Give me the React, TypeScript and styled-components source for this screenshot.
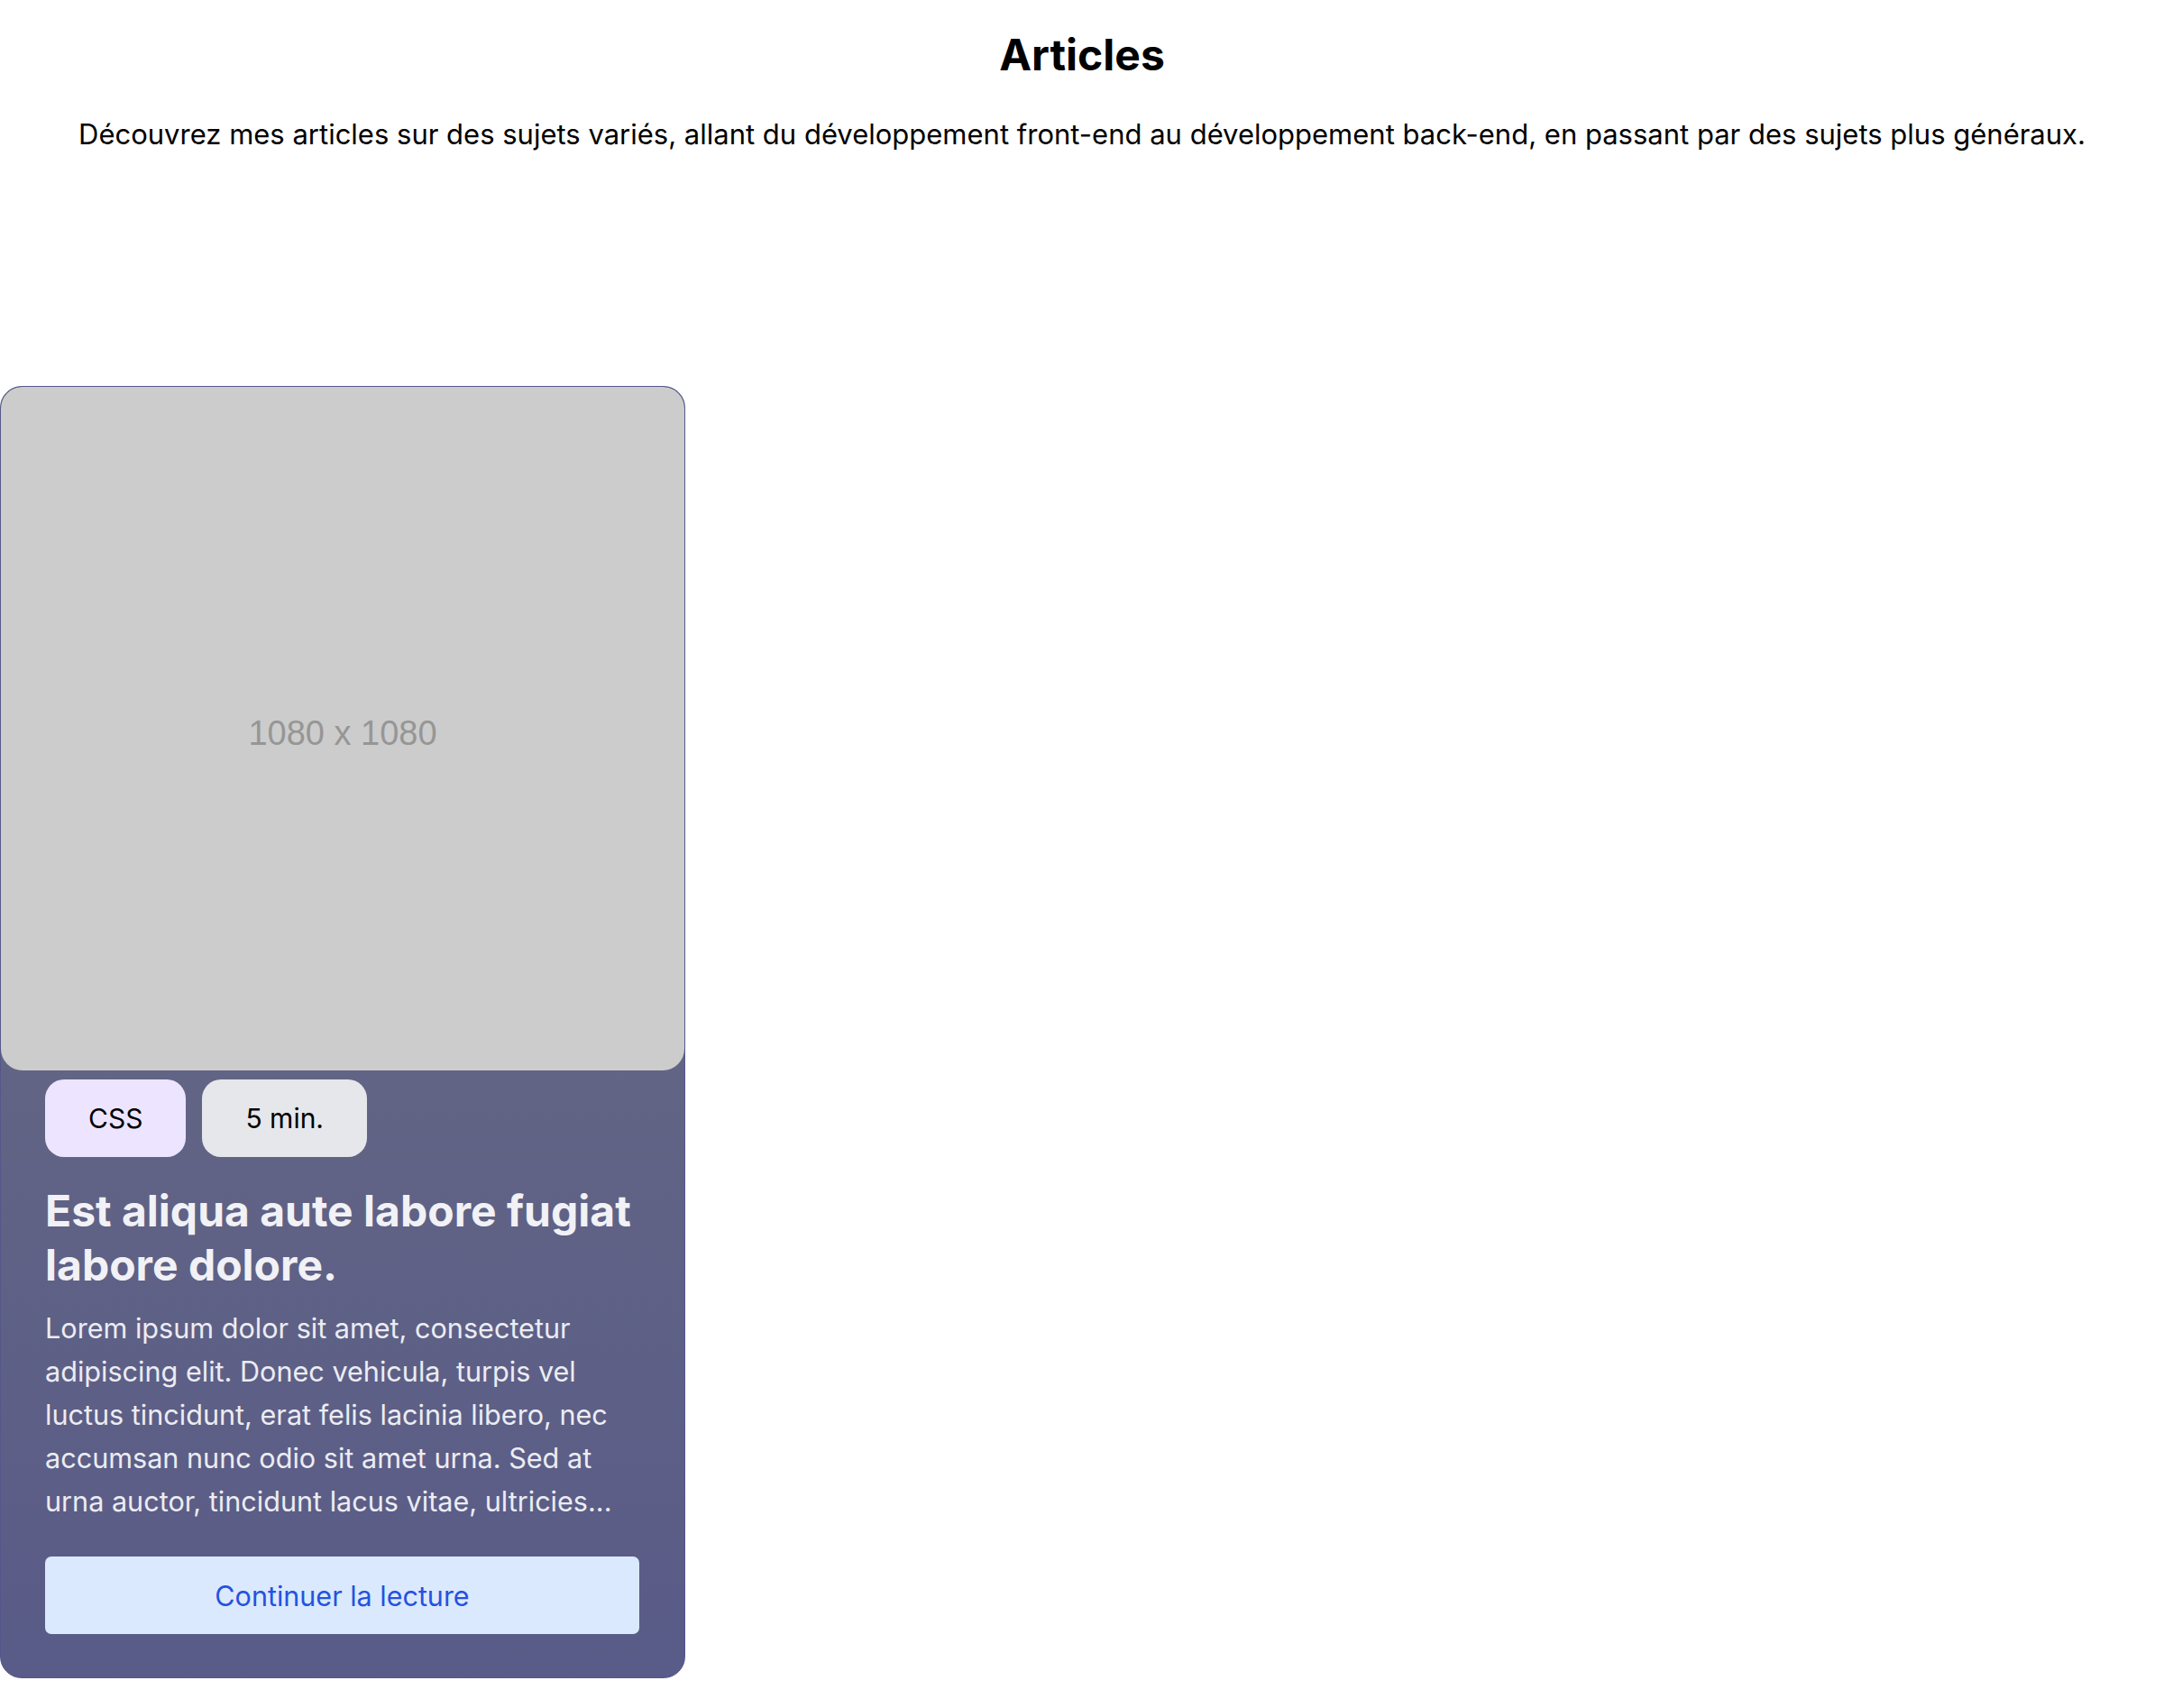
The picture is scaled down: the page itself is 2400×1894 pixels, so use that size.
import React from "react";
import styled, { createGlobalStyle } from "styled-components";

const GlobalStyle = createGlobalStyle`
  html, body { margin: 0; padding: 0; background: #ffffff; }
  body { font-family: Inter, "Noto Sans", sans-serif; color: #000; }
  * { box-sizing: border-box; }
`;

const Page = styled.main`
  display: flex;
  flex-direction: column;
  padding-top: 32px;
`;

const Header = styled.header`
  display: flex;
  flex-direction: column;
  align-items: center;
  gap: 39px;
`;

const Title = styled.h1`
  margin: 0;
  font-size: 48px;
  line-height: 58px;
  font-weight: 700;
  color: #000;
`;

const Lead = styled.p`
  margin: 0;
  font-size: 31px;
  line-height: 39px;
  font-weight: 400;
  color: #000;
  text-align: center;
`;

const Grid = styled.section`
  display: grid;
  grid-template-columns: repeat(3, 760px);
  margin-top: 260px;
`;

const Card = styled.article`
  display: flex;
  flex-direction: column;
  border: 1px solid #55578a;
  border-radius: 24px;
  background: linear-gradient(to bottom, #66698b 0%, #626584 50%, #595b88 100%);
  overflow: hidden;
`;

const Placeholder = styled.div`
  width: 100%;
  aspect-ratio: 1 / 1;
  background: #cccccc;
  border-radius: 24px;
  display: flex;
  align-items: center;
  justify-content: center;
  color: #969696;
  font-family: "Liberation Sans", Arial, sans-serif;
  font-size: 38px;
  padding-top: 11px;
`;

const Body = styled.div`
  display: flex;
  flex-direction: column;
  padding: 10px 50px 48px 49px;
`;

const Tags = styled.div`
  display: flex;
  gap: 18px;
`;

const Tag = styled.span<{ $tone: "violet" | "gray" }>`
  display: inline-flex;
  align-items: center;
  justify-content: center;
  height: 86px;
  padding: 0 48px;
  border-radius: 21px;
  font-size: 30px;
  color: #000;
  background: ${(p) => (p.$tone === "violet" ? "#ede5ff" : "#e5e7eb")};
`;

const CardTitle = styled.h2`
  margin: 30px 0 0;
  font-size: 48px;
  line-height: 60px;
  font-weight: 700;
  color: #f1f1f6;
`;

const Excerpt = styled.p`
  margin: 16px 0 0;
  font-size: 30.6px;
  line-height: 48px;
  color: #ececf2;
  display: -webkit-box;
  -webkit-line-clamp: 5;
  -webkit-box-orient: vertical;
  overflow: hidden;
`;

const ReadButton = styled.a`
  margin-top: 37px;
  display: flex;
  align-items: center;
  justify-content: center;
  height: 86px;
  border-radius: 7px;
  background: #dbe9fe;
  color: #2552e0;
  font-size: 30.5px;
  text-decoration: none;
  cursor: pointer;
`;

export default function App() {
  return (
    <>
      <GlobalStyle />
      <Page>
        <Header>
          <Title>Articles</Title>
          <Lead>
            Découvrez mes articles sur des sujets variés, allant du développement front-end au
            développement back-end, en passant par des sujets plus généraux.
          </Lead>
        </Header>
        <Grid>
          <Card>
            <Placeholder>1080 x 1080</Placeholder>
            <Body>
              <Tags>
                <Tag $tone="violet">CSS</Tag>
                <Tag $tone="gray">5 min.</Tag>
              </Tags>
              <CardTitle>Est aliqua aute labore fugiat labore dolore.</CardTitle>
              <Excerpt>
                Lorem ipsum dolor sit amet, consectetur adipiscing elit. Donec vehicula, turpis vel
                luctus tincidunt, erat felis lacinia libero, nec accumsan nunc odio sit amet urna.
                Sed at urna auctor, tincidunt lacus vitae, ultricies...
              </Excerpt>
              <ReadButton>Continuer la lecture</ReadButton>
            </Body>
          </Card>
        </Grid>
      </Page>
    </>
  );
}
